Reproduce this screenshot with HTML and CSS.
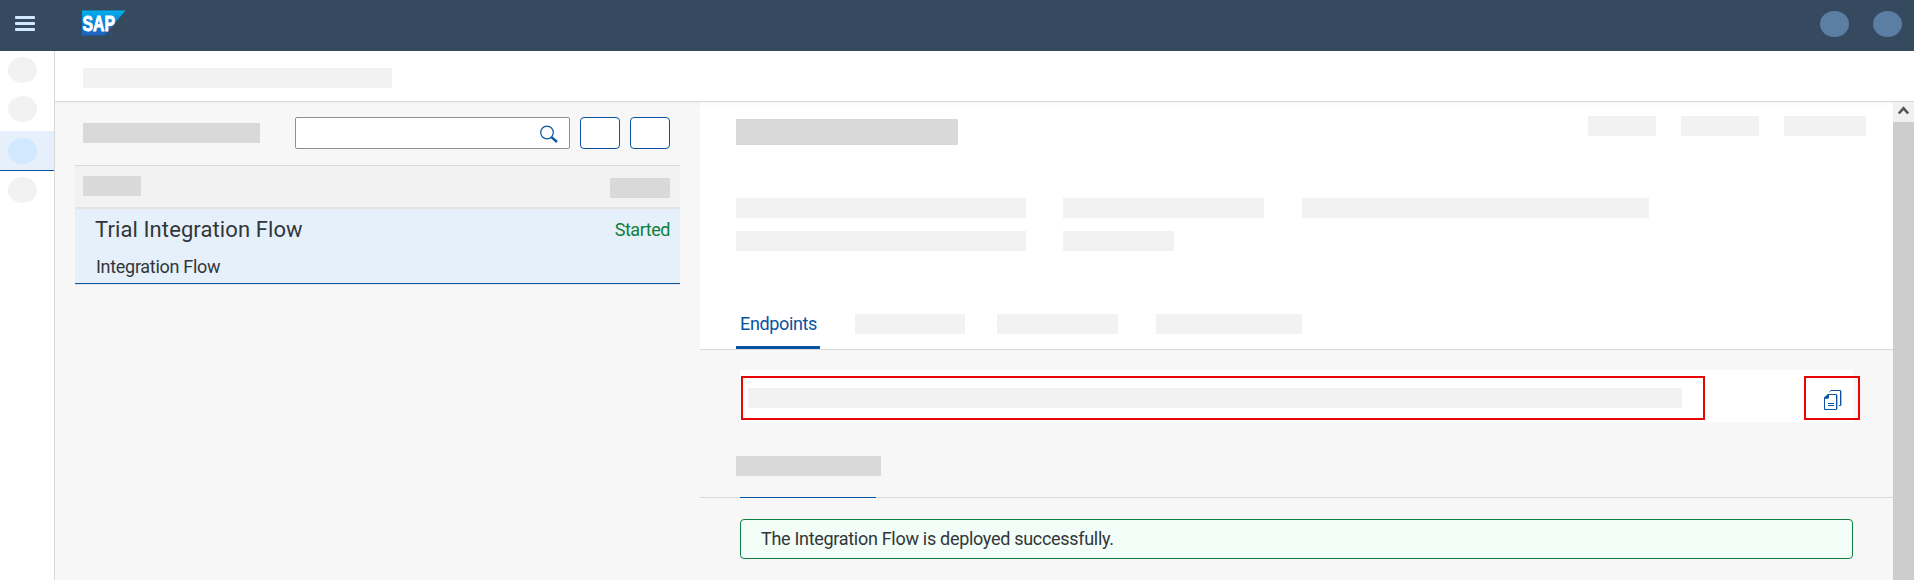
FILE: index.html
```html
<!DOCTYPE html>
<html lang="en">
<head>
<meta charset="utf-8">
<title>Integration Flow Monitor</title>
<link rel="stylesheet" href="styles.css">
</head>
<body>
<header class="shell">
  <svg class="menu" width="20" height="15" viewBox="0 0 20 15"><rect width="20" height="3" rx="1"/><rect y="6" width="20" height="3" rx="1"/><rect y="12" width="20" height="3" rx="1"/></svg>
  <svg class="logo" width="44" height="26" viewBox="0 0 44 26">
    <defs><linearGradient id="sap" x1="0" y1="0" x2="0" y2="1"><stop offset="0" stop-color="#00b1ee"/><stop offset=".5" stop-color="#0a83d3"/><stop offset="1" stop-color="#1f5fc0"/></linearGradient></defs>
    <path d="M0 .5H43.5L22.5 25.5H0Z" fill="url(#sap)"/>
    <text x="0.5" y="20.5" textLength="32.5" lengthAdjust="spacingAndGlyphs">SAP</text>
    <circle cx="28.5" cy="23.8" r="1.2" fill="#1f5fa8"/>
  </svg>
  <div class="shell-actions"><i class="avatar"></i><i class="avatar"></i></div>
</header>
<div class="app">
  <nav class="side">
    <div class="nav-item first"><i></i></div>
    <div class="nav-item second"><i></i></div>
    <div class="nav-item selected"><i></i></div>
    <div class="nav-item last"><i></i></div>
  </nav>
  <div class="page">
    <div class="crumbs"><i class="ph w309"></i></div>
    <div class="columns">
      <section class="master">
        <div class="toolbar">
          <i class="ph dark w177"></i>
          <div class="search"><svg width="20" height="20" viewBox="0 0 20 20"><circle cx="8" cy="7.5" r="6.3" fill="none" stroke="#0854a0" stroke-width="1.2"/><path d="M12.5 12.2L18 17" stroke="#0854a0" stroke-width="2.4"/></svg></div>
          <div class="btn"></div><div class="btn"></div>
        </div>
        <div class="list">
          <div class="list-head"><i class="ph dark w58"></i><i class="ph dark w60"></i></div>
          <div class="item">
            <div class="item-top"><span class="title">Trial Integration Flow</span><span class="status">Started</span></div>
            <div class="sub"><span>Integration Flow</span></div>
          </div>
        </div>
      </section>
      <main class="detail">
        <div class="object-head">
          <div class="head-row"><i class="ph dark big w222"></i><div class="actions"><i class="ph w68"></i><i class="ph w78"></i><i class="ph w82"></i></div></div>
          <div class="facts">
            <i class="ph w290"></i><i class="ph w201"></i><i class="ph w347"></i>
            <i class="ph w290"></i><i class="ph w111"></i>
          </div>
          <div class="tabs"><div class="tab"><span>Endpoints</span></div><i class="ph w110"></i><i class="ph w121"></i><i class="ph w146"></i></div>
        </div>
        <div class="endpoint">
          <div class="mark url"><i class="ph"></i></div>
          <div class="mark copy"><svg width="18" height="20" viewBox="0 0 18 20"><path d="M4.2 4.5H12.5V19.5H.5V8.2" fill="none" stroke="#0854a0"/><path d="M0 8.8V7.5L4 4H5V7.8L4 8.8Z" fill="#0854a0"/><path d="M4 13.5H10M4 15.5H10" stroke="#0854a0"/><path d="M5.5 1.8L7 .5H16.5V15.5H14.8" fill="none" stroke="#0854a0"/><path d="M17.5 1V16M13.5 5V19" stroke="#9dbad8" stroke-width=".9"/></svg></div>
        </div>
        <div class="section"><i class="ph dark w145"></i><div class="section-line"></div></div>
        <div class="message"><span>The Integration Flow is deployed successfully.</span></div>
      </main>
      <div class="scroll"><div class="up"><svg width="12" height="9" viewBox="0 0 12 9"><path d="M.8 7.5L5.5 2.3L10.2 7.5" fill="none" stroke="#555" stroke-width="2.6"/></svg></div></div>
    </div>
  </div>
</div>
</body>
</html>
```
FILE: styles.css
```css
* { box-sizing: border-box; }
body { margin: 0; width: 1914px; height: 580px; overflow: hidden; display: flex; flex-direction: column; background: #f7f7f7; color: #32363a; font: 18px/20px Roboto, "Liberation Sans", sans-serif; }
i { display: block; flex: none; }
svg { display: block; flex: none; overflow: visible; }
span { white-space: nowrap; }

.shell { height: 51px; flex: none; background: #354a5f; display: flex; align-items: flex-start; padding: 0 12px 0 15px; }
.menu { margin-top: 16px; fill: #d1e8ff; }
.logo { margin: 10px 0 0 47px; }
.logo text { font: bold 22px "Liberation Sans", sans-serif; fill: #fff; stroke: #fff; stroke-width: .9; }
.shell-actions { margin: 11px 0 0 auto; display: flex; gap: 24px; }
.avatar { width: 29px; height: 26px; border-radius: 50%; background: #5b7fa3; }

.app { flex: 1; display: flex; min-height: 0; }
.side { width: 55px; flex: none; background: #fff; border-right: 1px solid #d9d9d9; }
.nav-item { padding-left: 8px; }
.nav-item i { width: 29px; height: 26px; border-radius: 50%; background: #f2f2f2; }
.first { height: 39px; padding-top: 6px; }
.second { height: 41px; padding-top: 6px; }
.selected { height: 40px; padding-top: 7px; background: #e5f0fa; border-bottom: 1px solid #0854a0; }
.nav-item.selected i { background: #d1e8ff; }
.last { padding-top: 6px; }

.page { flex: 1; min-width: 0; display: flex; flex-direction: column; }
.crumbs { height: 51px; flex: none; background: #fff; border-bottom: 1px solid #d9d9d9; padding: 17px 0 0 28px; }
.columns { flex: 1; display: flex; min-height: 0; background: linear-gradient(rgba(0,0,0,.02), rgba(0,0,0,0) 5px); }

.ph { height: 20px; background: #f2f2f2; }
.ph.dark { background: #d9d9d9; }
.ph.big { height: 26px; }
.w58 { width: 58px; } .w60 { width: 60px; } .w68 { width: 68px; } .w78 { width: 78px; } .w82 { width: 82px; }
.w110 { width: 110px; } .w111 { width: 111px; } .w121 { width: 121px; } .w145 { width: 145px; } .w146 { width: 146px; }
.w177 { width: 177px; } .w201 { width: 201px; } .w222 { width: 222px; } .w290 { width: 290px; } .w309 { width: 309px; } .w347 { width: 347px; }

.master { width: 645px; flex: none; padding: 15px 20px 0; }
.toolbar { display: flex; align-items: center; gap: 10px; padding: 0 10px 0 8px; height: 32px; margin-bottom: 16px; }
.search { width: 275px; height: 32px; margin-left: 25px; background: #fff; border: 1px solid #89919a; border-radius: 2px; display: flex; justify-content: flex-end; padding: 7px 10px 0 0; }
.btn { width: 40px; height: 32px; background: #fff; border: 1px solid #0854a0; border-radius: 4px; }
.list-head { height: 44px; background: #f2f2f2; border-top: 1px solid #d9d9d9; border-bottom: 2px solid #e4e4e4; display: flex; justify-content: space-between; padding: 10px 10px 0 8px; }
.list-head .w60 { margin-top: 2px; }
.item { height: 76px; background: #e5f0fa; border-bottom: 1px solid #e4e4e4; box-shadow: inset 0 -1px #0854a0; padding: 8px 10px 0 20px; }
.item-top { display: flex; justify-content: space-between; align-items: flex-start; height: 40px; line-height: 26px; }
.title { font-size: 22px; letter-spacing: .1px; }
.status { color: #107e3e; letter-spacing: -.45px; }
.sub { padding-left: 1px; letter-spacing: -.3px; }

.detail { flex: 1; min-width: 0; }
.object-head { height: 248px; background: linear-gradient(#f9f9f9, #fff 5px); border-bottom: 1px solid #d9d9d9; padding: 14px 27px 0 36px; display: flex; flex-direction: column; }
.head-row { display: flex; justify-content: space-between; align-items: flex-start; height: 82px; padding-top: 3px; }
.actions { display: flex; gap: 25px; margin-top: -3px; }
.facts { display: grid; grid-template-columns: 290px 201px 347px; column-gap: 37px; row-gap: 13px; }
.facts .w347 { margin-left: 1px; }
.tabs { margin-top: auto; display: flex; height: 41px; padding-top: 6px; }
.tab { width: 84px; margin: -6px 35px 0 0; height: 41px; border-bottom: 3px solid #0854a0; border-radius: 2px 2px 0 0; color: #0854a0; padding: 6px 0 0 4px; letter-spacing: -.35px; }
.tabs .w110 { margin-right: 32px; }
.tabs .w121 { margin-right: 38px; }
.endpoint { width: 1113px; height: 52px; margin: 20px 0 0 40px; background: #fff; padding: 6px 0 0 1px; display: flex; gap: 99px; }
.mark { height: 44px; border: 2px solid #e90606; flex: none; }
.url { width: 964px; padding: 10px 0 0 5px; }
.url .ph { width: 934px; }
.copy { width: 56px; padding: 12px 0 0 18px; }
.section { height: 76px; padding: 34px 0 0 36px; border-bottom: 1px solid #d9d9d9; }
.section-line { width: 136px; height: 1px; margin: 21px 0 0 4px; background: #0854a0; }
.message { width: 1113px; height: 40px; margin: 21px 0 0 40px; padding: 9px 20px; background: #f1fdf6; border: 1px solid #107e3e; border-radius: 4px; letter-spacing: -.3px; }

.scroll { width: 21px; flex: none; background: #cdcdcd; }
.up { height: 20px; background: #f1f1f1; padding: 4px 0 0 5px; }
```
